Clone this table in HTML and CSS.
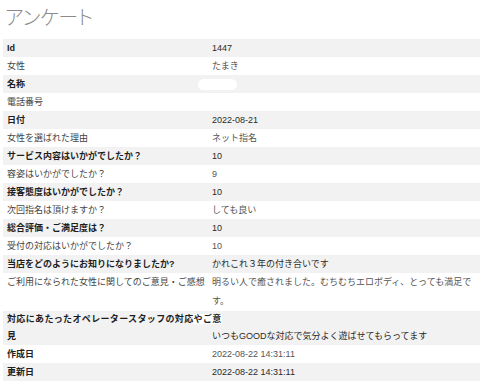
FILE: index.html
```html
<!DOCTYPE html>
<html lang="ja">
<head>
<meta charset="utf-8">
<title>アンケート</title>
<link rel="stylesheet" href="styles.css">
</head>
<body>
<div class="page">
  <h1 class="title">アンケート</h1>
  <table class="survey">
    <tbody>
      <tr class="odd"><th>Id</th><td>1447</td></tr>
      <tr class="even"><th>女性</th><td>たまき</td></tr>
      <tr class="odd"><th>名称</th><td><span class="masked"></span></td></tr>
      <tr class="even"><th>電話番号</th><td></td></tr>
      <tr class="odd"><th>日付</th><td>2022-08-21</td></tr>
      <tr class="even"><th>女性を選ばれた理由</th><td>ネット指名</td></tr>
      <tr class="odd"><th>サービス内容はいかがでしたか？</th><td>10</td></tr>
      <tr class="even"><th>容姿はいかがでしたか？</th><td>9</td></tr>
      <tr class="odd"><th>接客態度はいかがでしたか？</th><td>10</td></tr>
      <tr class="even"><th>次回指名は頂けますか？</th><td>しても良い</td></tr>
      <tr class="odd"><th>総合評価・ご満足度は？</th><td>10</td></tr>
      <tr class="even"><th>受付の対応はいかがでしたか？</th><td>10</td></tr>
      <tr class="odd"><th>当店をどのようにお知りになりましたか?</th><td>かれこれ３年の付き合いです</td></tr>
      <tr class="even tall"><th>ご利用になられた女性に関してのご意見・ご感想</th><td>明るい人で癒されました。むちむちエロボディ、とっても満足です。</td></tr>
      <tr class="odd wrap"><th><span class="overflow">対応にあたったオペレータースタッフの対応やご意</span><br>見</th><td>いつもGOODな対応で気分よく遊ばせてもらってます</td></tr>
      <tr class="even strong"><th>作成日</th><td>2022-08-22 14:31:11</td></tr>
      <tr class="odd"><th>更新日</th><td>2022-08-22 14:31:11</td></tr>
    </tbody>
  </table>
</div>
</body>
</html>
```

FILE: styles.css
```css
html, body {
  margin: 0;
  padding: 0;
  background: #ffffff;
}

.page {
  padding: 0 0 0 3px;
  font-family: "Liberation Sans", "Noto Sans CJK JP", sans-serif;
  font-size: 9px;
}

.title {
  margin: 0;
  padding: 5px 0 0 2px;
  height: 39px;
  box-sizing: border-box;
  font-family: "Noto Sans CJK JP", sans-serif;
  font-feature-settings: "palt";
  font-size: 20px;
  line-height: 24px;
  font-weight: 300;
  color: #8a8a8a;
  letter-spacing: -0.3px;
}

.survey {
  width: 100%;
  table-layout: fixed;
  border-collapse: collapse;
  border-spacing: 0;
}

.survey th,
.survey td {
  padding: 0 0 0 4px;
  text-align: left;
  line-height: 18px;
}

.survey th {
  width: 201px;
  vertical-align: top;
  font-weight: normal;
  color: #444;
  white-space: nowrap;
  overflow: visible;
}

.survey td {
  vertical-align: bottom;
  color: #555;
  padding-right: 4px;
}

.survey tr.odd {
  background: #f2f2f2;
}

.survey tr.odd th,
.survey tr.strong th {
  font-weight: bold;
  color: #1e1e1e;
}

.survey tr.odd td {
  color: #2a2a2a;
}

.survey tr.tall td {
  line-height: 19px;
}

.survey tr.wrap th {
  line-height: 17px;
}

.survey tr.wrap td {
  line-height: 18px;
  padding-bottom: 0;
}

.overflow {
  position: relative;
  z-index: 1;
  background: linear-gradient(to right, transparent 186px, #ffffff 186px);
  letter-spacing: 0.35px;
}

.masked {
  display: inline-block;
  width: 39px;
  height: 11px;
  margin: 0 0 3px -14px;
  vertical-align: bottom;
  border-radius: 6px;
  background: #ffffff;
}
```
